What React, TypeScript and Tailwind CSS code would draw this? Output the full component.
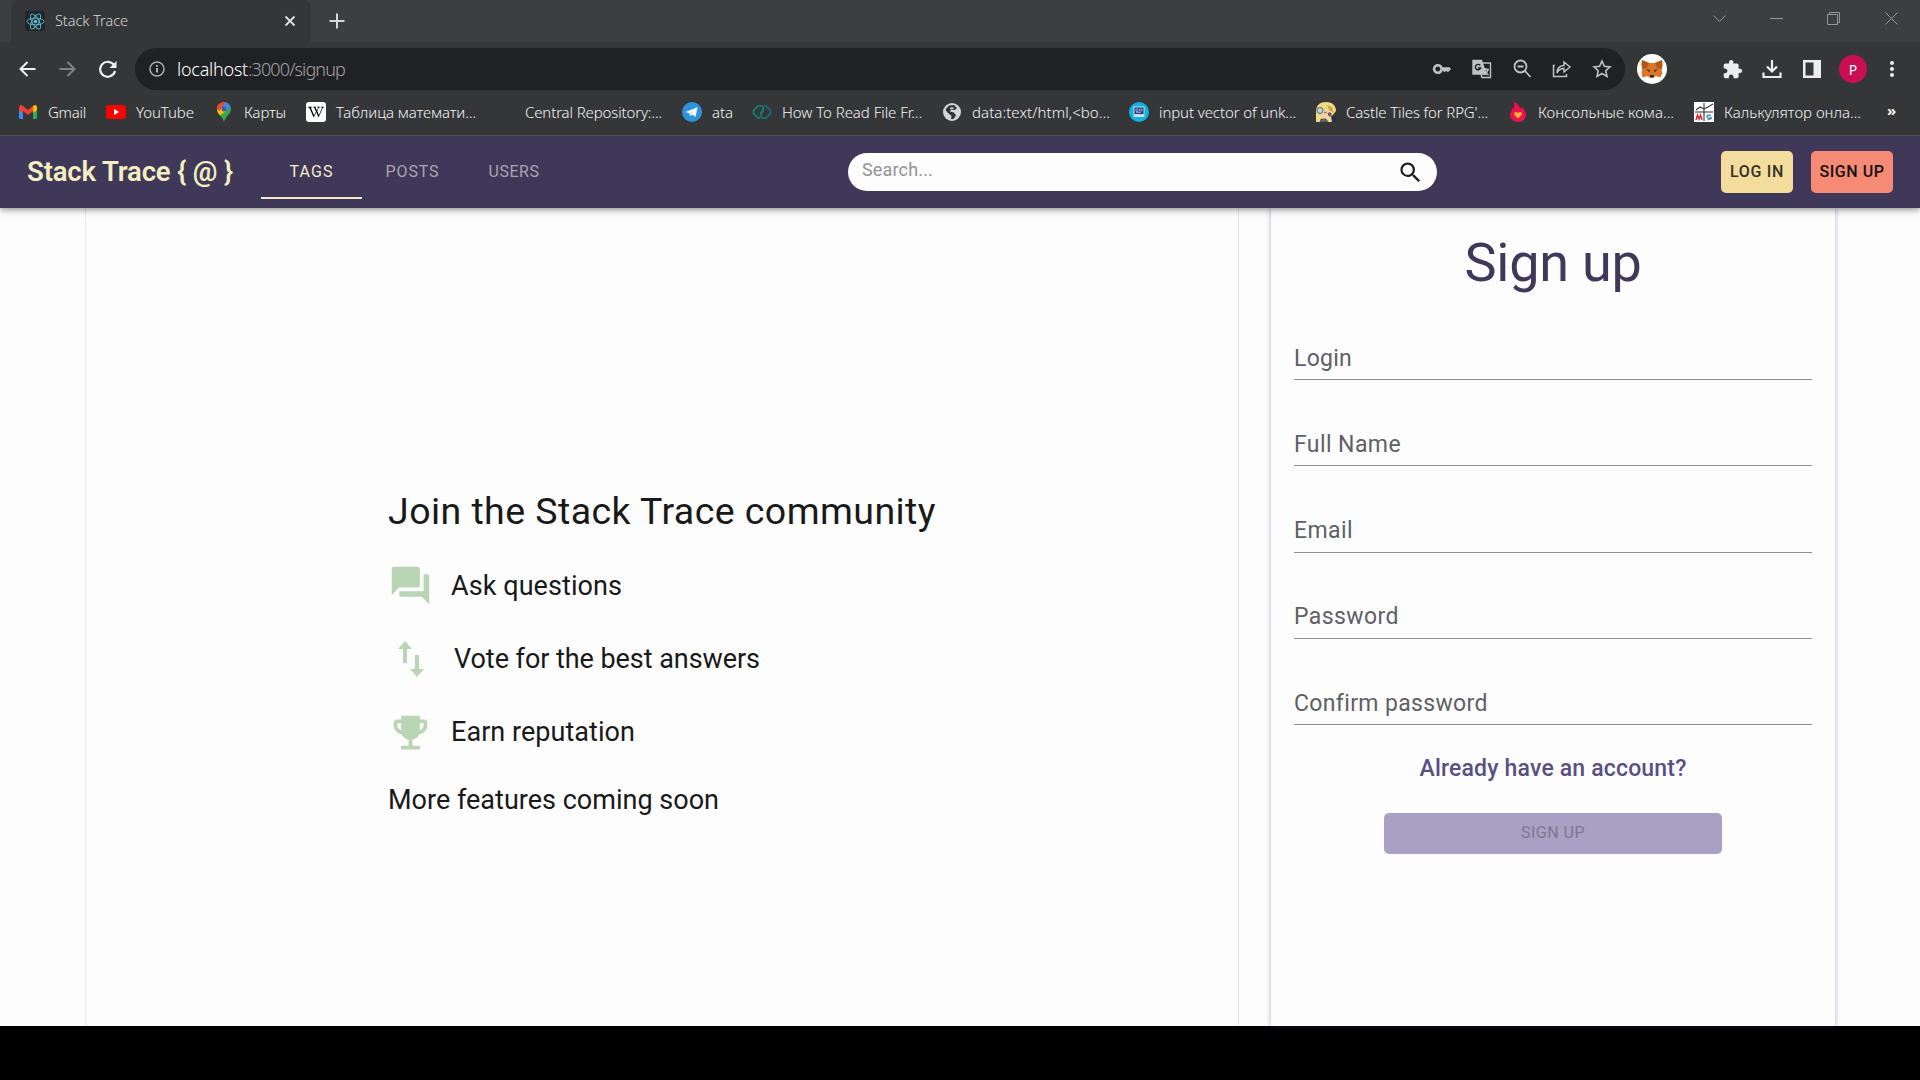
import React from "react";
import { MdForum, MdEmojiEvents, MdSearch, MdKey, MdExtension, MdMoreVert } from "react-icons/md";
import { FaWikipediaW } from "react-icons/fa";

const Gmail = () => (
  <svg viewBox="0 0 20 16" className="h-[16px] w-[20px]">
    <path d="M1 3v10.500q0 1.500 1.500 1.500H5V6z" fill="#4285f4" />
    <path d="M19 3v10.500q0 1.500-1.500 1.500H15V6z" fill="#34a853" />
    <path d="M1 3.500Q1 1 3 1q1 0 1.700.7L10 6l5-4.200V7l-5 4-5-4v2L1 6z" fill="#ea4335" />
    <path d="M15 2l.8-.6Q19 .3 19 3.500V6l-4 3z" fill="#fbbc04" />
  </svg>
);
const YouTube = () => (
  <svg viewBox="0 0 20 14" className="h-[14px] w-[20px]">
    <rect width="20" height="14" rx="3" fill="#f00" />
    <path d="M8 4l5.200 3L8 10z" fill="#fff" />
  </svg>
);
const MapPin = () => (
  <svg viewBox="0 0 14 20" className="h-[20px] w-[14px]">
    <path d="M7 20C6 15 0 12 0 7a7 7 0 0 1 14 0c0 5-6 8-7 13z" fill="#34a853" />
    <path d="M1.600 2.600A7 7 0 0 1 9 .3L4.700 5.500z" fill="#ea4335" />
    <path d="M9 .3A7 7 0 0 1 13.300 4L9 9 7 4.500 4.500 5.500z" fill="#4285f4" />
    <path d="M1.600 2.600L5 5.500 9 9l-6 4.500C1.500 11.500 0 9.500 0 7q0-2.500 1.600-4.400z" fill="#fbbc04" />
    <path d="M1.600 2.600L5 5.500 2 9 0 7q0-2.500 1.600-4.400z" fill="#ea4335" />
    <circle cx="7" cy="7" r="2.500" fill="#3c5fb4" />
  </svg>
);
const Wiki = () => (
  <span className="flex size-5 items-center justify-center rounded-[3px] bg-white text-black">
    <FaWikipediaW size={16} />
  </span>
);
const Telegram = () => (
  <svg viewBox="0 0 20 20" className="size-5">
    <circle cx="10" cy="10" r="10" fill="#2f93dc" />
    <path d="M3.500 10L15.500 5.200 13.500 15 10 12.500 8 14.300 7.600 11.500z" fill="#fff" />
    <path d="M7.600 11.500L13 7.500 9 12l-1 2.300z" fill="#b9d9f1" />
  </svg>
);
const Loops = () => (
  <svg viewBox="0 0 20 16" className="h-[16px] w-[20px]" fill="none" strokeWidth="1.600">
    <path d="M8 14H6L1.500 9.500v-3L6 2h4l1.500 2L8 11" stroke="#12857c" />
    <path d="M12 2h2l4.500 4.500v3L14 14h-4l-1.500-2L12 5" stroke="#12767e" />
  </svg>
);
const Globe = () => (
  <svg viewBox="0 0 20 20" className="size-[20px]">
    <circle cx="10" cy="10" r="9" fill="#d5d5d5" />
    <path d="M7 3.500L12 3l3 3-2 2-4-.5-1 2 4 1 2 3-2.500 3.500H9l.500-3L5 10 3.500 7.500z" fill="#333436" />
    <path d="M8 5.500h4l-1 1.500H8z" fill="#d5d5d5" />
  </svg>
);
const Laptop = () => (
  <svg viewBox="0 0 20 20" className="size-5">
    <circle cx="10" cy="10" r="10" fill="#0fb3e0" />
    <rect x="5" y="5" width="10" height="7.500" fill="#25407a" stroke="#e4edf6" strokeWidth=".8" />
    <path d="M7 7h2v2.500H7zm3.500 0H13v2h-2.500zM7 10.500h5" stroke="#a5c1e5" strokeWidth=".7" fill="none" />
    <path d="M5 13h10l1 2H4z" fill="#d2dbe6" />
  </svg>
);
const Castle = () => (
  <svg viewBox="0 0 20 20" className="size-5">
    <path d="M0 20V10C0 4 3 0 10 0s10 4 10 9l-4 5v6z" fill="#f0db83" />
    <path d="M4 9l6-2 6 2-1 6-4 3H6l-2-3z" fill="#f3d1a5" />
    <path d="M11 3l5 2 2 6-5-3z" fill="#c9a949" />
    <circle cx="4" cy="8.500" r="3" fill="#c3d5dc" stroke="#4e6770" />
    <path d="M8 11l3-1M12 11h3v3h-2zM5 17h5l2 3H4z" fill="#54737b" stroke="#614a3b" strokeWidth=".8" />
    <path d="M15 14l5 1v5h-4z" fill="#292b58" />
  </svg>
);
const Flame = () => (
  <svg viewBox="0 0 16 20" className="h-[20px] w-[16px]">
    <path d="M4 0c4 1 5 4 6.500 7l1.800-2C14 7 16 10 16 13a8 7 0 0 1-16 0c0-3 2-4 2-7l1.500 1Q5 4 4 0z" fill="#ee104f" />
    <path d="M8 16.500l-4-4q0-3 2.500-2.500L8 11l1.500-1q2.500-.5 2.500 2.500z" fill="#fdb62f" />
  </svg>
);
const Calc = () => (
  <svg viewBox="0 0 20 20" className="size-5">
    <rect width="20" height="20" fill="#fff" />
    <path d="M10 1v18M1 10h18M2 8l4-3 4 2 4-2 5-3" stroke="#333" strokeWidth="1.100" fill="none" />
    <path d="M2 18l1.500-5L5 17l1.500-4L8 18" stroke="#d02c32" strokeWidth="1.500" fill="none" />
    <path d="M17 13.500q-4-1-4 1t3.500 1.500-3 2" stroke="#477fbd" strokeWidth="1.300" fill="none" />
  </svg>
);

type Bookmark = { label: string; icon: React.ReactNode; cell: string; width: number };

const bookmarks: Bookmark[] = [
  { label: "Gmail", icon: <Gmail />, cell: "w-[88px]", width: 38 },
  { label: "YouTube", icon: <YouTube />, cell: "w-[108px]", width: 58 },
  { label: "Карты", icon: <MapPin />, cell: "w-[92px]", width: 42 },
  { label: "Таблица математи...", icon: <Wiki />, cell: "w-[189px]", width: 140 },
  { label: "Central Repository:...", icon: null, cell: "w-[187px]", width: 137 },
  { label: "ata", icon: <Telegram />, cell: "w-[70px]", width: 21 },
  { label: "How To Read File Fr...", icon: <Loops />, cell: "w-[190px]", width: 140 },
  { label: "data:text/html,<bo...", icon: <Globe />, cell: "w-[187px]", width: 138 },
  { label: "input vector of unk...", icon: <Laptop />, cell: "w-[187px]", width: 137 },
  { label: "Castle Tiles for RPG'...", icon: <Castle />, cell: "w-[192px]", width: 142 },
  { label: "Консольные кома...", icon: <Flame />, cell: "w-[186px]", width: 136 },
  { label: "Калькулятор онла...", icon: <Calc />, cell: "w-[187px]", width: 137 },
];

/** Single-line label whose letter spacing is adjusted to reach an exact width. */
function Fit({ text, width, size, weight = 400 }: { text: string; width: number; size: number; weight?: number }) {
  const ref = React.useRef<HTMLSpanElement>(null);
  const [spacing, setSpacing] = React.useState(0);
  React.useLayoutEffect(() => {
    if (ref.current) setSpacing((width - ref.current.getBoundingClientRect().width) / text.length);
  }, [text, width]);
  return (
    <span ref={ref} className="inline-block whitespace-pre" style={{ fontSize: size, fontWeight: weight, letterSpacing: spacing }}>
      {text}
    </span>
  );
}

function TitleBar() {
  return (
    <div className="flex h-[42px] items-stretch bg-[#3d3e3f] pl-[11px] text-[#d5d5d5]">
      <div className="flex w-[300px] items-center rounded-t-lg bg-[#353638] pl-[14px]">
        <span className="flex size-5 items-center justify-center rounded-[3px] bg-[#20262b]">
          <svg viewBox="0 0 20 20" className="size-[19px]" fill="none" stroke="#5fb9cc" strokeWidth="1">
            <ellipse cx="10" cy="10" rx="9" ry="3.500" />
            <ellipse cx="10" cy="10" rx="9" ry="3.500" transform="rotate(60 10 10)" />
            <ellipse cx="10" cy="10" rx="9" ry="3.500" transform="rotate(120 10 10)" />
            <circle cx="10" cy="10" r="1.400" fill="#8be0ef" />
          </svg>
        </span>
        <span className="-mt-[2px] ml-[10px] flex-1"><Fit text="Stack Trace" width={73} size={14.5} weight={300} /></span>
        <svg viewBox="0 0 12 12" className="mr-[15px] size-[12px]" stroke="#e0e0e0" strokeWidth="1.800"><path d="M1.500 1.500l9 9m0-9l-9 9" /></svg>
      </div>
      <svg viewBox="0 0 16 16" className="mt-[13px] ml-[18px] size-[16px]" stroke="#d8d8d8" strokeWidth="2"><path d="M8 .5v15M.5 8h15" /></svg>
      <svg viewBox="0 0 190 16" className="mt-[11px] mr-[22px] ml-auto h-[16px] w-[190px]" fill="none" stroke="#96979a" strokeWidth="1">
        <path d="M5.500 4.500l6 6 6-6M62 7.500h13" />
        <path d="M119.500 3.500h10v10h-10zM121.500 3.500v-2h10v10h-2" />
        <path d="M177.500 1.500l12 12m0-12l-12 12" />
      </svg>
    </div>
  );
}

function Toolbar() {
  return (
    <div className="flex h-[50px] items-center bg-[#353638] pt-[4px]">
      <svg viewBox="0 0 100 18" className="ml-[18px] h-[18px] w-[100px]" fill="none" strokeWidth="2">
        <path d="M17.500 9H2.500M9.500 2L2.500 9l7 7" stroke="#f0f0f0" />
        <path d="M41.500 9h15M49.500 2l7 7-7 7" stroke="#808181" />
        <path d="M96 5.200A7.500 7.500 0 1 0 97 11" stroke="#f0f0f0" strokeWidth="2.200" />
        <path d="M98.500 1v7h-7z" fill="#f0f0f0" />
      </svg>
      <div className="ml-[17px] flex h-[42px] w-[1490px] items-center rounded-full bg-[#202124] pl-[14px]">
        <svg viewBox="0 0 16 16" className="size-[16px]" fill="none" stroke="#aaabab" strokeWidth="1.500">
          <circle cx="8" cy="8" r="7" /><path d="M8 7v4.500M8 4v1.700" strokeWidth="2" />
        </svg>
        <span className="ml-[12px] whitespace-pre text-white"><Fit text="localhost" width={71} size={18} weight={300} /></span>
        <span className="text-[#a0a1a3]"><Fit text=":3000/signup" width={97} size={18} weight={300} /></span>
        <div className="mr-[13px] ml-auto flex items-center gap-[20px] text-[#c0c1c3]">
          <MdKey size={20} />
          <svg viewBox="0 0 20 20" className="size-[20px]" fill="none" stroke="currentColor" strokeWidth="1.400">
            <path d="M1 1.500h8.500L14 15H1z" fill="currentColor" />
            <path d="M11 4h7.500v14.500H10L9 15M11 10.500h6M14 9v1.500M16 10.500q-1 4-4 5M12.500 12q1 2.500 4 4" />
            <path d="M8.300 6.500A2.700 2.700 0 1 0 8.600 9H6" stroke="#202124" />
          </svg>
          <svg viewBox="0 0 20 20" className="size-[20px]" fill="none" stroke="currentColor" strokeWidth="1.800">
            <circle cx="8.500" cy="7.500" r="6" /><path d="M13 12l5.500 6M5.500 7.500h6" />
          </svg>
          <svg viewBox="0 0 20 20" className="size-[20px]" fill="none" stroke="currentColor" strokeWidth="1.500">
            <path d="M3 6.500H1.500v11h13V15M5 14q0-7 7-7.500V3l6 5-6 5V9.500q-5 0-7 4.500z" />
          </svg>
          <svg viewBox="0 0 20 20" className="size-[20px]" fill="none" stroke="currentColor" strokeWidth="1.600">
            <path d="M10 2l2.400 5.300 5.600.6-4.200 3.800 1.200 5.700-5-2.900-5 2.900 1.200-5.700L2 7.900l5.600-.6z" />
          </svg>
        </div>
      </div>
      <svg viewBox="0 0 30 30" className="ml-[12px] size-[30px]">
        <circle cx="15" cy="15" r="15" fill="#fff" />
        <path d="M5 6l7 3h6l7-3 .8 5-1.300 4 .8 4-1.800 4.500-5-1.500-2 1.800h-4L10.500 22l-5 1.500L4.500 19l.8-4L4.200 11z" fill="#dd7626" />
        <path d="M5 6l7 3-2 5-5 1zM25 6l-7 3 2 5 5 1z" fill="#b9571b" />
        <path d="M9 15l4 1-.5 2.500zM21 15l-4 1 .5 2.500z" fill="#343b46" />
        <path d="M13 21h4l-.5 2.500h-3z" fill="#25252a" />
      </svg>
      <div className="ml-[55px] flex items-center text-[#ededed]">
        <MdExtension size={21} />
        <svg viewBox="0 0 20 20" className="ml-[19px] size-[20px]" fill="none" stroke="currentColor" strokeWidth="2.200">
          <path d="M10 1v11M5 7.500l5 5 5-5M1.500 13.500v4.500h17v-4.500" />
        </svg>
        <svg viewBox="0 0 18 18" className="ml-[21px] size-[18px]"><path d="M0 0h18v18H0zM2.500 2.500v13h8v-13z" fill="currentColor" fillRule="evenodd" /></svg>
        <span className="ml-[18px] flex size-[28px] items-center justify-center rounded-full bg-[#c90f51] text-[14px] text-white">P</span>
        <MdMoreVert size={24} className="ml-[13px]" />
      </div>
    </div>
  );
}

function BookmarkBar() {
  return (
    <div className="flex h-[44px] items-center border-b border-[#57584f] bg-[#353638] pb-[3px] pl-[18px] text-[#f4f4f4]">
      {bookmarks.map((b) => (
        <div key={b.label} className={`flex shrink-0 items-center ${b.cell}`}>
          <span className="flex w-[20px] shrink-0 justify-center">{b.icon}</span>
          <span className="-mt-[1px] ml-[10px]"><Fit text={b.label} width={b.width} size={15} weight={300} /></span>
        </div>
      ))}
      <span className="-mt-[4px] ml-[6px] text-[15px] font-bold">»</span>
    </div>
  );
}

function AppBar() {
  return (
    <header className="relative z-10 flex h-[72px] items-center bg-[#3f3859] font-[Roboto] shadow-[0_2px_4px_-1px_rgba(0,0,0,0.2),0_4px_5px_0_rgba(0,0,0,0.14),0_1px_10px_0_rgba(0,0,0,0.12)]">
      <div className="ml-[27px] w-[234px] text-[#f4efc0]"><Fit text="Stack Trace { @ }" width={206} size={27.5} weight={600} /></div>
      <nav className="flex h-[54px] self-end text-[#aaa5b0]">
        <div className="mb-[9px] flex w-[101px] items-center justify-center border-b-2 border-[#f4e9cd] pb-[8px] text-[#f3eccb]"><Fit text="TAGS" width={44} size={16} /></div>
        <div className="mb-[9px] flex w-[101px] items-center justify-center pb-[10px]"><Fit text="POSTS" width={54} size={16} /></div>
        <div className="mb-[9px] flex w-[102px] items-center justify-center pb-[10px]"><Fit text="USERS" width={51} size={16} /></div>
      </nav>
      <div className="ml-[283px] flex h-[38px] w-[589px] items-center rounded-full bg-[#fdfdfe] pr-[13px] pl-[14px] text-[#939393]">
        <span className="-mt-[5px] flex-1"><Fit text="Search..." width={71} size={18} /></span>
        <MdSearch size={27} className="text-[#1c1c1c]" />
      </div>
      <div className="ml-auto flex h-[42px] w-[72px] items-center justify-center rounded-[5px] bg-[#f4dc9c] text-[#34312b]"><Fit text="LOG IN" width={54} size={16} weight={500} /></div>
      <div className="mr-[27px] ml-[18px] flex h-[42px] w-[82px] items-center justify-center rounded-[5px] bg-[#f58b74] text-[#171010]"><Fit text="SIGN UP" width={65} size={16} weight={500} /></div>
    </header>
  );
}

const fields = [
  { label: "Login", width: 58 },
  { label: "Full Name", width: 107 },
  { label: "Email", width: 59 },
  { label: "Password", width: 105 },
  { label: "Confirm password", width: 193 },
];

function Main() {
  return (
    <main className="flex h-[818px] bg-[#fdfdfe] pl-[85px] font-[Roboto]">
      <section className="flex w-[1154px] flex-col border-x border-[#e6e6ee] pt-[275px] pl-[302px] text-[#191919]">
        <div className="h-[66px]"><Fit text="Join the Stack Trace community" width={548} size={37.5} /></div>
        <div className="flex h-[74px] items-center">
          <MdForum size={45} className="-mt-[2px] text-[#b9d5b4]" />
          <span className="ml-[18px]"><Fit text="Ask questions" width={171} size={27} /></span>
        </div>
        <div className="flex h-[73px] items-center">
          <svg viewBox="0 0 28 36" className="-mt-[1px] ml-[9px] h-[36px] w-[28px] fill-[#b9d5b4]"><path d="M8 0l7 8h-5v14H6V8H1zM20 36l-7-8h5V14h4v14h5z" /></svg>
          <span className="ml-[29px]"><Fit text="Vote for the best answers" width={306} size={27} /></span>
        </div>
        <div className="flex h-[73px] items-center">
          <MdEmojiEvents size={45} className="text-[#b9d5b4]" />
          <span className="ml-[18px]"><Fit text="Earn reputation" width={184} size={27} /></span>
        </div>
        <div className="mt-[11px]"><Fit text="More features coming soon" width={331} size={27} /></div>
      </section>
      <section className="ml-[32px] flex w-[564px] flex-col items-center px-[23px] pt-[14px] shadow-[0_0_5px_rgba(70,60,120,0.42)]">
        <h1 className="h-[80px] text-[#3f3859]"><Fit text="Sign up" width={177} size={54} /></h1>
        {fields.map((f) => (
          <div key={f.label} className="mb-[8.3px] flex h-[78px] w-[518px] items-end border-b border-[#909097] pb-[3px] text-[#5f5f65]">
            <Fit text={f.label} width={f.width} size={23} />
          </div>
        ))}
        <div className="mt-[19px] text-[#5a4f83]"><Fit text="Already have an account?" width={267} size={23} weight={500} /></div>
        <div className="mt-[26px] flex h-[41px] w-[338px] shrink-0 items-center justify-center rounded-[5px] bg-[#a8a1c4] text-[#7c7890]"><Fit text="SIGN UP" width={64} size={16} /></div>
      </section>
    </main>
  );
}

export default function App() {
  return (
    <div className="flex h-[1080px] w-[1920px] flex-col overflow-hidden bg-black font-['Noto_Sans',sans-serif]">
      <TitleBar />
      <Toolbar />
      <BookmarkBar />
      <AppBar />
      <Main />
    </div>
  );
}
